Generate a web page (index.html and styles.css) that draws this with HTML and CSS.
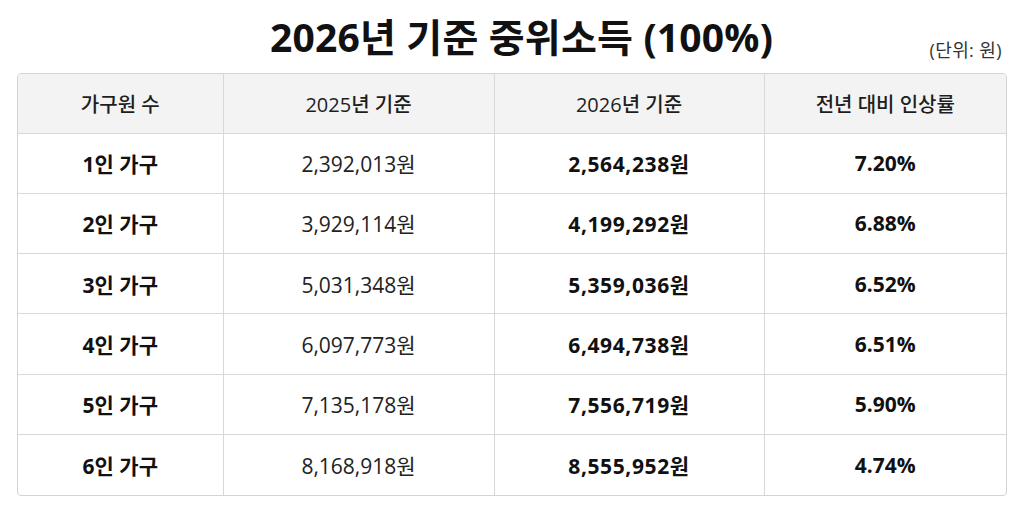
FILE: index.html
```html
<!DOCTYPE html>
<html lang="ko">
<head>
<meta charset="utf-8">
<link rel="stylesheet" href="styles.css">
</head>
<body>
<div class="page">
  <div class="head">
    <h1 class="title">2026년 기준 중위소득 (100%)</h1>
    <div class="unit">(단위: 원)</div>
  </div>
  <div class="table-wrap">
    <table class="tbl">
      <colgroup>
        <col class="c1"><col class="c2"><col class="c3"><col class="c4">
      </colgroup>
      <thead>
        <tr><th>가구원 수</th><th>2025년 기준</th><th>2026년 기준</th><th>전년 대비 인상률</th></tr>
      </thead>
      <tbody>
        <tr><td class="b">1인 가구</td><td>2,392,013원</td><td class="b num">2,564,238원</td><td class="b">7.20%</td></tr>
        <tr><td class="b">2인 가구</td><td>3,929,114원</td><td class="b num">4,199,292원</td><td class="b">6.88%</td></tr>
        <tr><td class="b">3인 가구</td><td>5,031,348원</td><td class="b num">5,359,036원</td><td class="b">6.52%</td></tr>
        <tr><td class="b">4인 가구</td><td>6,097,773원</td><td class="b num">6,494,738원</td><td class="b">6.51%</td></tr>
        <tr><td class="b">5인 가구</td><td>7,135,178원</td><td class="b num">7,556,719원</td><td class="b">5.90%</td></tr>
        <tr><td class="b">6인 가구</td><td>8,168,918원</td><td class="b num">8,555,952원</td><td class="b">4.74%</td></tr>
      </tbody>
    </table>
  </div>
</div>
</body>
</html>
```

FILE: styles.css
```css
* { box-sizing: border-box; }
html, body { margin: 0; padding: 0; background: #ffffff; }
body {
  font-family: "Open Sans", "Noto Sans CJK KR", sans-serif;
  color: #1a1a1a;
}
.page {
  width: 1024px;
  height: 512px;
  padding: 11px 18px 0 17px;
}
.head {
  position: relative;
  height: 62px;
}
.title {
  margin: 0;
  text-align: center;
  font-size: 39px;
  font-weight: 700;
  line-height: 52px;
  letter-spacing: 0.2px;
  padding-left: 20px;
  color: #111;
}
.unit {
  position: absolute;
  right: 4px;
  top: 26px;
  font-size: 18px;
  line-height: 26px;
  letter-spacing: 0.4px;
  color: #333;
}
.table-wrap {
  border: 1px solid #d4d4d4;
  border-radius: 4px;
  overflow: hidden;
  width: 990px;
}
.tbl {
  width: 100%;
  border-collapse: collapse;
  table-layout: fixed;
}
.c1 { width: 205px; }
.c2 { width: 271px; }
.c3 { width: 270px; }
.c4 { width: auto; }
.tbl th, .tbl td {
  border: 1px solid #d9d9d9;
  text-align: center;
  vertical-align: middle;
  padding: 0;
}
.tbl tr:first-child th { border-top: none; }
.tbl tr:last-child td { border-bottom: none; }
.tbl th:first-child, .tbl td:first-child { border-left: none; }
.tbl th:last-child, .tbl td:last-child { border-right: none; }
.tbl th {
  height: 59px;
  background: #f3f3f3;
  font-size: 20px;
  font-weight: 500;
  color: #1e1e1e;
}
.tbl td {
  height: 60.3px;
  font-size: 21px;
  font-weight: 400;
  color: #222;
}
.tbl td.b {
  font-weight: 700;
  color: #111;
}
.tbl td.num {
  letter-spacing: 0.6px;
}
```
